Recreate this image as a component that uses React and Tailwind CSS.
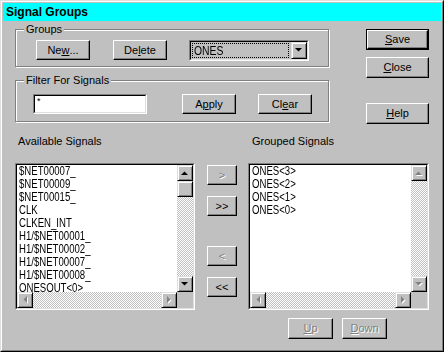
import React from 'react';

const sunkenOuter = 'border border-t-[#808080] border-l-[#808080] border-r-white border-b-white';
const sunkenInner = 'border border-t-black border-l-black border-r-[#dfdfdf] border-b-[#dfdfdf]';
const raisedBtn = 'border border-t-white border-l-white border-r-black border-b-black shadow-[inset_-1px_-1px_0_#808080]';
const scrollBtn = 'border border-t-[#dfdfdf] border-l-[#dfdfdf] border-r-black border-b-black shadow-[inset_1px_1px_0_#fff,inset_-1px_-1px_0_#808080] bg-[#c0c0c0] flex items-center justify-center';
const checker = 'bg-[repeating-conic-gradient(#c0c0c0_0%_25%,#ffffff_0%_50%)] bg-[length:2px_2px]';

function Arrow({ dir, disabled }) {
  const pts = {
    up: '0,4 7,4 3.5,0.5',
    down: '0,0 7,0 3.5,3.5',
    left: '4,0 4,7 0.5,3.5',
    right: '0,0 0,7 3.5,3.5',
  }[dir];
  const vertical = dir === 'up' || dir === 'down';
  const w = vertical ? 7 : 4;
  const h = vertical ? 4 : 7;
  return (
    <svg width={w + 1} height={h + 1} viewBox={`0 0 ${w + 1} ${h + 1}`}>
      {disabled && <polygon points={pts} fill="#fff" transform="translate(1,1)" />}
      <polygon points={pts} fill={disabled ? '#808080' : '#000'} />
    </svg>
  );
}

function Btn({ children, className = '', disabled }) {
  return (
    <div className={`${raisedBtn} bg-[#c0c0c0] flex items-center justify-center leading-none ${disabled ? 'text-[#808080] [text-shadow:1px_1px_0_#fff]' : ''} ${className}`}>
      {children}
    </div>
  );
}

function GroupBox({ label, className = '', children }) {
  return (
    <div className={`relative border border-[#808080] shadow-[inset_1px_1px_0_#fff,1px_1px_0_#fff] ${className}`}>
      <span className="absolute left-[8px] top-[-7px] px-[2px] bg-[#c0c0c0] leading-[13px]">{label}</span>
      {children}
    </div>
  );
}

function ListBox({ items, thumb, activeV, className = '' }) {
  return (
    <div className={`${sunkenOuter} ${className}`}>
      <div className={`${sunkenInner} w-full h-full flex flex-col`}>
        <div className="flex flex-1 min-h-0">
          <div className="flex-1 bg-white overflow-hidden pl-[2px] text-[12px] leading-[13px] font-['Liberation_Sans',Arial,sans-serif]">
            {items.map((t) => (
              <div key={t} className="whitespace-nowrap">
                <span className="inline-block origin-left scale-x-[0.8]">{t}</span>
              </div>
            ))}
          </div>
          <div className="w-[16px] flex flex-col">
            <div className={`${scrollBtn} h-[16px]`}><Arrow dir="up" disabled={!activeV} /></div>
            {thumb && <div className={`${scrollBtn} h-[16px]`} />}
            <div className={`flex-1 ${checker}`} />
            <div className={`${scrollBtn} h-[16px]`}><Arrow dir="down" disabled={!activeV} /></div>
          </div>
        </div>
        <div className="flex h-[16px]">
          <div className={`${scrollBtn} w-[16px]`}><Arrow dir="left" disabled /></div>
          <div className={`flex-1 ${checker}`} />
          <div className={`${scrollBtn} w-[16px]`}><Arrow dir="right" disabled /></div>
          <div className="w-[16px] bg-[#c0c0c0]" />
        </div>
      </div>
    </div>
  );
}

const available = [
  '$NET00007_',
  '$NET00009_',
  '$NET00015_',
  'CLK',
  'CLKEN_INT',
  'H1/$NET00001_',
  'H1/$NET00002_',
  'H1/$NET00007_',
  'H1/$NET00008_',
  'ONESOUT<0>',
];

const grouped = ['ONES<3>', 'ONES<2>', 'ONES<1>', 'ONES<0>'];

export default function App() {
  return (
    <div className="w-[444px] h-[352px] bg-[#c0c0c0] text-black text-[11px] font-['Liberation_Sans',Arial,sans-serif]">
      <div className="w-full h-full border border-t-[#dfdfdf] border-l-[#dfdfdf] border-r-black border-b-black">
        <div className="w-full h-full border border-t-white border-l-white border-r-[#808080] border-b-[#808080] p-px flex flex-col">
          {/* title bar */}
          <div className="h-[18px] bg-[#00ffff] flex items-center pl-[3px] text-[12px] font-bold">
            Signal Groups
          </div>

          {/* top section */}
          <div className="flex items-start h-[103px] pl-[12px]">
            <div className="flex flex-col">
              <GroupBox label="Groups" className="mt-[8px] w-[314px] h-[38px]">
                <div className="flex items-start pt-[10px] pl-[20px]">
                  <Btn className="w-[54px] h-[20px]">Ne<u>w</u>...</Btn>
                  <Btn className="ml-[23px] w-[54px] h-[20px]">De<u>l</u>ete</Btn>
                  <div className={`${sunkenOuter} ml-[22px] w-[120px] h-[21px]`}>
                    <div className={`${sunkenInner} w-full h-full flex items-center bg-[#c0c0c0]`}>
                      <div className="flex-1 h-[15px] ml-px mr-[2px] border border-dotted border-black flex items-center pl-px text-[13px]">
                        <span className="inline-block origin-left scale-x-[0.8]">ONES</span>
                      </div>
                      <div className={`${scrollBtn} w-[16px] h-[17px]`}><Arrow dir="down" /></div>
                    </div>
                  </div>
                </div>
              </GroupBox>
              <GroupBox label="Filter For Signals" className="mt-[13px] w-[314px] h-[42px]">
                <div className="flex items-start pt-[13px] pl-[17px]">
                  <div className={`${sunkenOuter} w-[114px] h-[20px]`}>
                    <div className={`${sunkenInner} w-full h-full bg-white pl-[2px] text-[9px] leading-[10px]`}>*</div>
                  </div>
                  <Btn className="ml-[35px] w-[54px] h-[20px]">A<u>p</u>ply</Btn>
                  <Btn className="ml-[22px] w-[54px] h-[20px]">Cl<u>e</u>ar</Btn>
                </div>
              </GroupBox>
            </div>
            <div className="ml-[37px] flex flex-col">
              <div className="mt-[8px] w-[63px] h-[21px] border border-black">
                <Btn className="w-full h-full"><u>S</u>ave</Btn>
              </div>
              <Btn className="mt-[7px] w-[63px] h-[21px]"><u>C</u>lose</Btn>
              <Btn className="mt-[25px] w-[63px] h-[21px]"><u>H</u>elp</Btn>
            </div>
          </div>

          {/* list labels */}
          <div className="flex mt-[11px] leading-[13px]">
            <span className="ml-[15px] w-[234px]">Available Signals</span>
            <span>Grouped Signals</span>
          </div>

          {/* lists */}
          <div className="flex items-start mt-[15px] pl-[12px]">
            <ListBox items={available} thumb activeV className="w-[180px] h-[147px]" />
            <div className="ml-[12px] w-[30px] flex flex-col">
              <Btn disabled className="mt-[2px] h-[20px]">&gt;</Btn>
              <Btn className="mt-[11px] h-[20px]">&gt;&gt;</Btn>
              <Btn disabled className="mt-[30px] h-[20px]">&lt;</Btn>
              <Btn className="mt-[11px] h-[20px]">&lt;&lt;</Btn>
            </div>
            <ListBox items={grouped} className="ml-[11px] w-[181px] h-[147px]" />
          </div>

          {/* up / down */}
          <div className="flex mt-[8px] pl-[285px]">
            <Btn disabled className="w-[45px] h-[21px]"><u>U</u>p</Btn>
            <Btn disabled className="ml-[9px] w-[45px] h-[21px]"><u>D</u>own</Btn>
          </div>
        </div>
      </div>
    </div>
  );
}
